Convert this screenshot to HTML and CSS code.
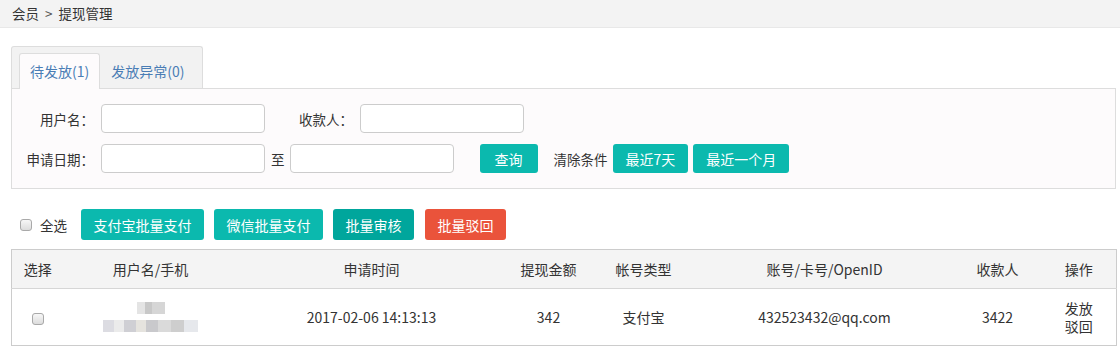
FILE: index.html
```html
<!DOCTYPE html>
<html lang="zh-CN">
<head>
<meta charset="UTF-8" />
<title>提现管理</title>
<link rel="stylesheet" href="styles.css">
</head>
<body>
  <div class="crumb">会员 <span class="sep">&gt;</span> 提现管理</div>
  <div class="main">
    <div class="tabs">
      <a class="tab active" href="#">待发放(1)</a>
      <a class="tab" href="#">发放异常(0)</a>
    </div>
    <div class="panel">
      <div class="row">
        <label class="lbl">用户名：</label>
        <input class="ipt" type="text" />
        <label class="lbl lbl2">收款人：</label>
        <input class="ipt" type="text" />
      </div>
      <div class="row">
        <label class="lbl">申请日期：</label>
        <input class="ipt" type="text" />
        <span class="to">至</span>
        <input class="ipt" type="text" />
        <button class="btn search">查询</button>
        <span class="clear">清除条件</span>
        <button class="btn">最近7天</button>
        <button class="btn">最近一个月</button>
      </div>
    </div>

    <div class="toolbar">
      <label class="all"><input class="chk" type="checkbox" /> 全选</label>
      <button class="btn big">支付宝批量支付</button>
      <button class="btn big">微信批量支付</button>
      <button class="btn big dark">批量审核</button>
      <button class="btn big red">批量驳回</button>
    </div>

    <table class="list">
      <thead>
        <tr>
          <th class="c1">选择</th>
          <th class="c2">用户名/手机</th>
          <th class="c3">申请时间</th>
          <th class="c4">提现金额</th>
          <th class="c5">帐号类型</th>
          <th class="c6">账号/卡号/OpenID</th>
          <th class="c7">收款人</th>
          <th class="c8">操作</th>
        </tr>
      </thead>
      <tbody>
        <tr>
          <td><input class="chk" type="checkbox" /></td>
          <td>
            <div class="blur b1"></div>
            <div class="blur b2"></div>
          </td>
          <td>2017-02-06 14:13:13</td>
          <td>342</td>
          <td>支付宝</td>
          <td>432523432@qq.com</td>
          <td>3422</td>
          <td class="ops"><a href="#">发放</a><a href="#">驳回</a></td>
        </tr>
      </tbody>
    </table>
  </div>
</body>
</html>
```

FILE: styles.css
```css
* {
  box-sizing: border-box;
}
body {
  margin: 0;
  font-family: "Noto Sans CJK SC", "Noto Sans", sans-serif;
  font-size: 14px;
  color: #333;
  background: #fff;
}
.crumb {
  height: 28px;
  line-height: 27px;
  padding-left: 12px;
  font-size: 13.5px;
  background: #f3f3f3;
  border-bottom: 1px solid #e8e8e8;
}
.crumb .sep {
  color: #555;
  margin: 0 3px;
}
.main {
  padding: 18px 4px 0 11px;
}
.tabs {
  display: inline-flex;
  align-items: flex-end;
  height: 42px;
  padding: 0 7px 0 7px;
  background: #f2f2f2;
  border: 1px solid #ddd;
  border-bottom: none;
  border-radius: 3px 3px 0 0;
  vertical-align: bottom;
}
.tab {
  display: block;
  height: 36px;
  line-height: 34px;
  padding: 0 10px;
  font-size: 14px;
  color: #4a7db5;
  text-decoration: none;
  border: 1px solid transparent;
  border-bottom: none;
  margin-bottom: -1px;
}
.tab.active {
  background: #fdfbfc;
  border-color: #ddd;
  border-radius: 3px 3px 0 0;
}
.panel {
  background: #fdfbfc;
  border: 1px solid #ddd;
  padding: 15px 0 15px 0;
}
.row {
  display: flex;
  align-items: center;
}
.row + .row {
  margin-top: 11px;
}
.lbl {
  width: 82px;
  margin-right: 7px;
  text-align: right;
  font-size: 13.5px;
}
.lbl2 {
  width: 88px;
}
.ipt {
  width: 164px;
  height: 29px;
  border: 1px solid #ccc;
  border-radius: 4px;
  background: #fff;
  outline: none;
}
.to {
  font-size: 13.5px;
  margin: 0 5px 0 6px;
}
.btn {
  height: 29px;
  padding: 0 13px;
  border: none;
  border-radius: 3px;
  background: #0bb9ae;
  color: #fff;
  font-family: inherit;
  font-size: 14px;
  cursor: pointer;
  margin-left: 5px;
}
.btn.search {
  margin-left: 26px;
  padding: 0 15px;
}
.clear {
  margin-left: 16px;
  font-size: 13.5px;
}
.toolbar {
  display: flex;
  align-items: center;
  margin-top: 20px;
  height: 31px;
}
.all {
  display: flex;
  align-items: center;
  margin-left: 9px;
  width: 61px;
  font-size: 13.5px;
}
.all .chk {
  margin-right: 8px;
}
.btn.big {
  height: 31px;
  padding: 0 12.5px;
  margin-left: 0;
  margin-right: 10px;
}
.btn.dark {
  background: #00a69c;
  margin-right: 11px;
}
.btn.red {
  background: #ea533b;
}
.chk {
  -webkit-appearance: none;
  appearance: none;
  width: 12px;
  height: 12px;
  margin: 0;
  border: 1px solid #a9a9a9;
  border-radius: 3px;
  background: linear-gradient(#f7f7f7, #dcdcdc);
  vertical-align: middle;
}
.list {
  width: 1105px;
  margin-top: 9px;
  border-collapse: collapse;
  border: 1px solid #ccc;
  table-layout: fixed;
}
.list th {
  height: 39px;
  font-weight: normal;
  background: #f4f4f4;
  border-bottom: 1px solid #d6d6d6;
}
.list td {
  height: 57px;
  text-align: center;
}
.c1 { width: 52px; }
.c2 { width: 174px; }
.c3 { width: 268px; }
.c4 { width: 86px; }
.c5 { width: 104px; }
.c6 { width: 258px; }
.c7 { width: 88px; }
.c8 { width: 75px; }
.blur {
  margin: 0 auto;
  height: 12px;
  filter: blur(0.6px);
}
.b1 {
  width: 28px;
  margin-bottom: 6px;
  background: linear-gradient(90deg, #e4e4e4 0 30%, #c8c8c8 30% 55%, #d6d6d6 55% 100%);
}
.b2 {
  width: 95px;
  background: linear-gradient(90deg, #dcdce2 0 12%, #ebebeb 12% 22%, #cfcfd4 22% 35%, #e5e3de 35% 45%, #c9c9cc 45% 58%, #dadada 58% 72%, #cecece 72% 85%, #e6e8ec 85% 100%);
}
.ops a {
  display: block;
  color: #333;
  text-decoration: none;
  line-height: 18px;
}
```
